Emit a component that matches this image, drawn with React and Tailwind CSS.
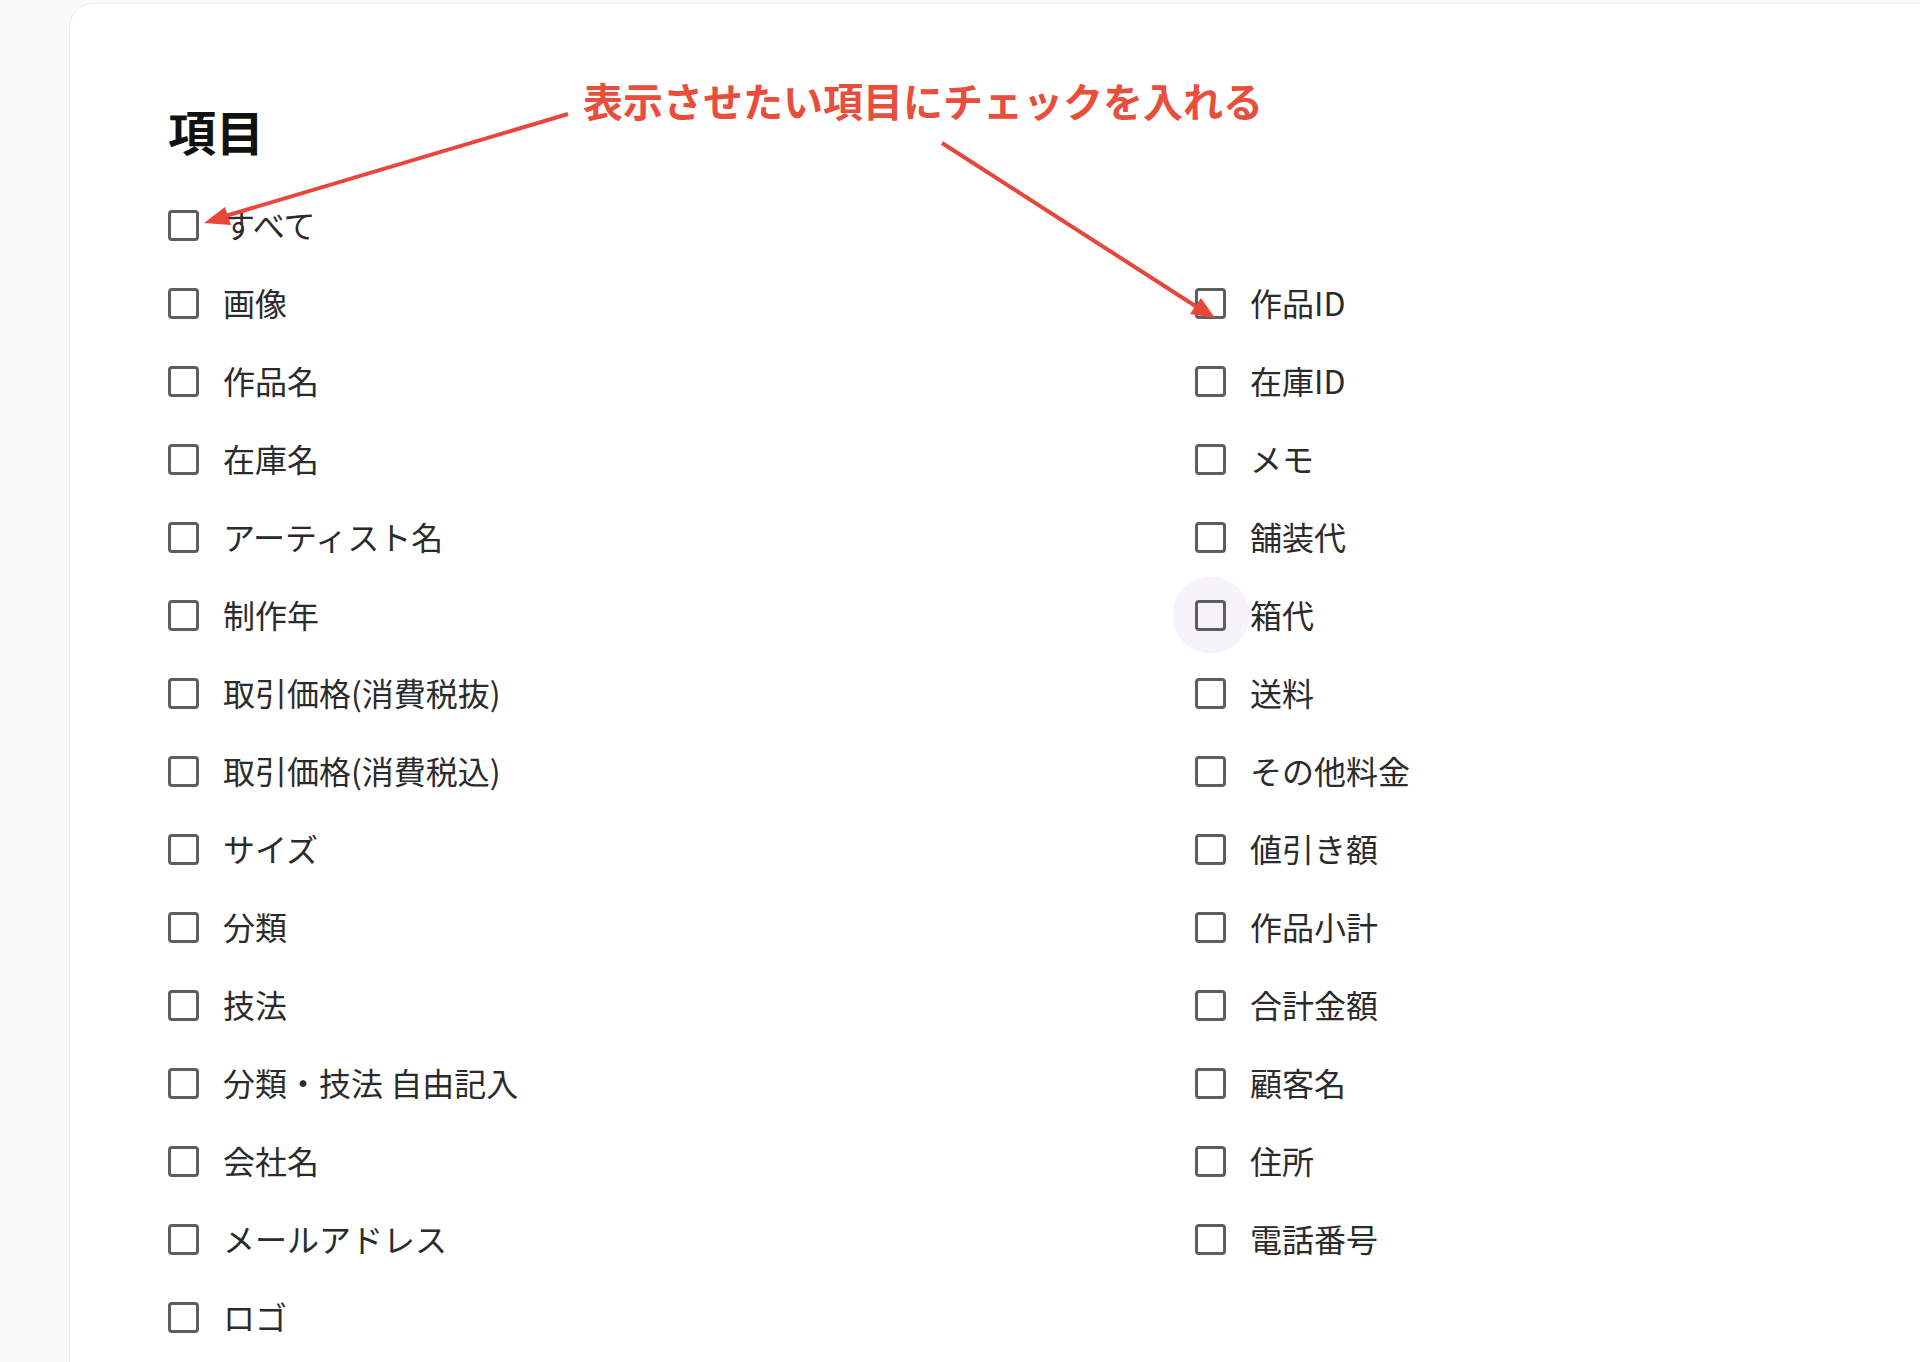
import React from "react";

const leftItems = [
  "画像",
  "作品名",
  "在庫名",
  "アーティスト名",
  "制作年",
  "取引価格(消費税抜)",
  "取引価格(消費税込)",
  "サイズ",
  "分類",
  "技法",
  "分類・技法 自由記入",
  "会社名",
  "メールアドレス",
  "ロゴ",
];

const rightItems = [
  "作品ID",
  "在庫ID",
  "メモ",
  "舗装代",
  "箱代",
  "送料",
  "その他料金",
  "値引き額",
  "作品小計",
  "合計金額",
  "顧客名",
  "住所",
  "電話番号",
];

function CheckRow({ label, hovered }) {
  return (
    <label className="flex h-[78px] items-center">
      <span className="relative flex h-[31px] w-[31px] shrink-0 items-center justify-center">
        {hovered && (
          <span className="absolute left-1/2 top-1/2 h-[77px] w-[77px] -translate-x-1/2 -translate-y-1/2 rounded-full bg-[#f6f3fb]" />
        )}
        <span className="relative h-[31px] w-[31px] rounded-[4px] border-[3.5px] border-[#5e5e5b] bg-transparent" />
      </span>
      <span className="ml-[24px] -mt-[2px] text-[32px] leading-none text-[#2b2b2b]">{label}</span>
    </label>
  );
}

function Annotation() {
  return (
    <>
      <div className="absolute left-[583px] top-[80px] text-[40px] font-bold leading-[40px] text-[#e94d3c]">
        表示させたい項目にチェックを入れる
      </div>
      <svg className="pointer-events-none absolute left-0 top-0" width="1920" height="1362">
        {/* arrow to すべて */}
        <line x1="568" y1="114" x2="222" y2="217" stroke="#e8463a" strokeWidth="4" />
        <polygon points="204,223 231,225 225,207" fill="#e8463a" />
        {/* arrow to 作品ID */}
        <line x1="942" y1="143" x2="1200" y2="309" stroke="#e8463a" strokeWidth="4" />
        <polygon points="1215,318 1190,314 1201,298" fill="#e8463a" />
      </svg>
    </>
  );
}

export default function App() {
  return (
    <div
      className="relative h-[1362px] w-[1920px] overflow-hidden bg-[#fafaf8] pt-[3px]"
      style={{ fontFamily: '"Noto Sans CJK JP", "Noto Sans", sans-serif' }}
    >
      {/* Card */}
      <div className="ml-[69px] h-[1500px] w-[1950px] rounded-[24px] border border-[#ebeae4] bg-white pl-[98px] pt-[102px]">
        <h1 className="text-[48px] font-bold leading-[48px] text-[#111]">項目</h1>

        <div className="mt-[32px]">
          <CheckRow label="すべて" />
          <div className="flex">
            <div className="w-[1027px]">
              {leftItems.map((item) => (
                <CheckRow key={item} label={item} />
              ))}
            </div>
            <div>
              {rightItems.map((item) => (
                <CheckRow key={item} label={item} hovered={item === "箱代"} />
              ))}
            </div>
          </div>
        </div>
      </div>

      <Annotation />
    </div>
  );
}
